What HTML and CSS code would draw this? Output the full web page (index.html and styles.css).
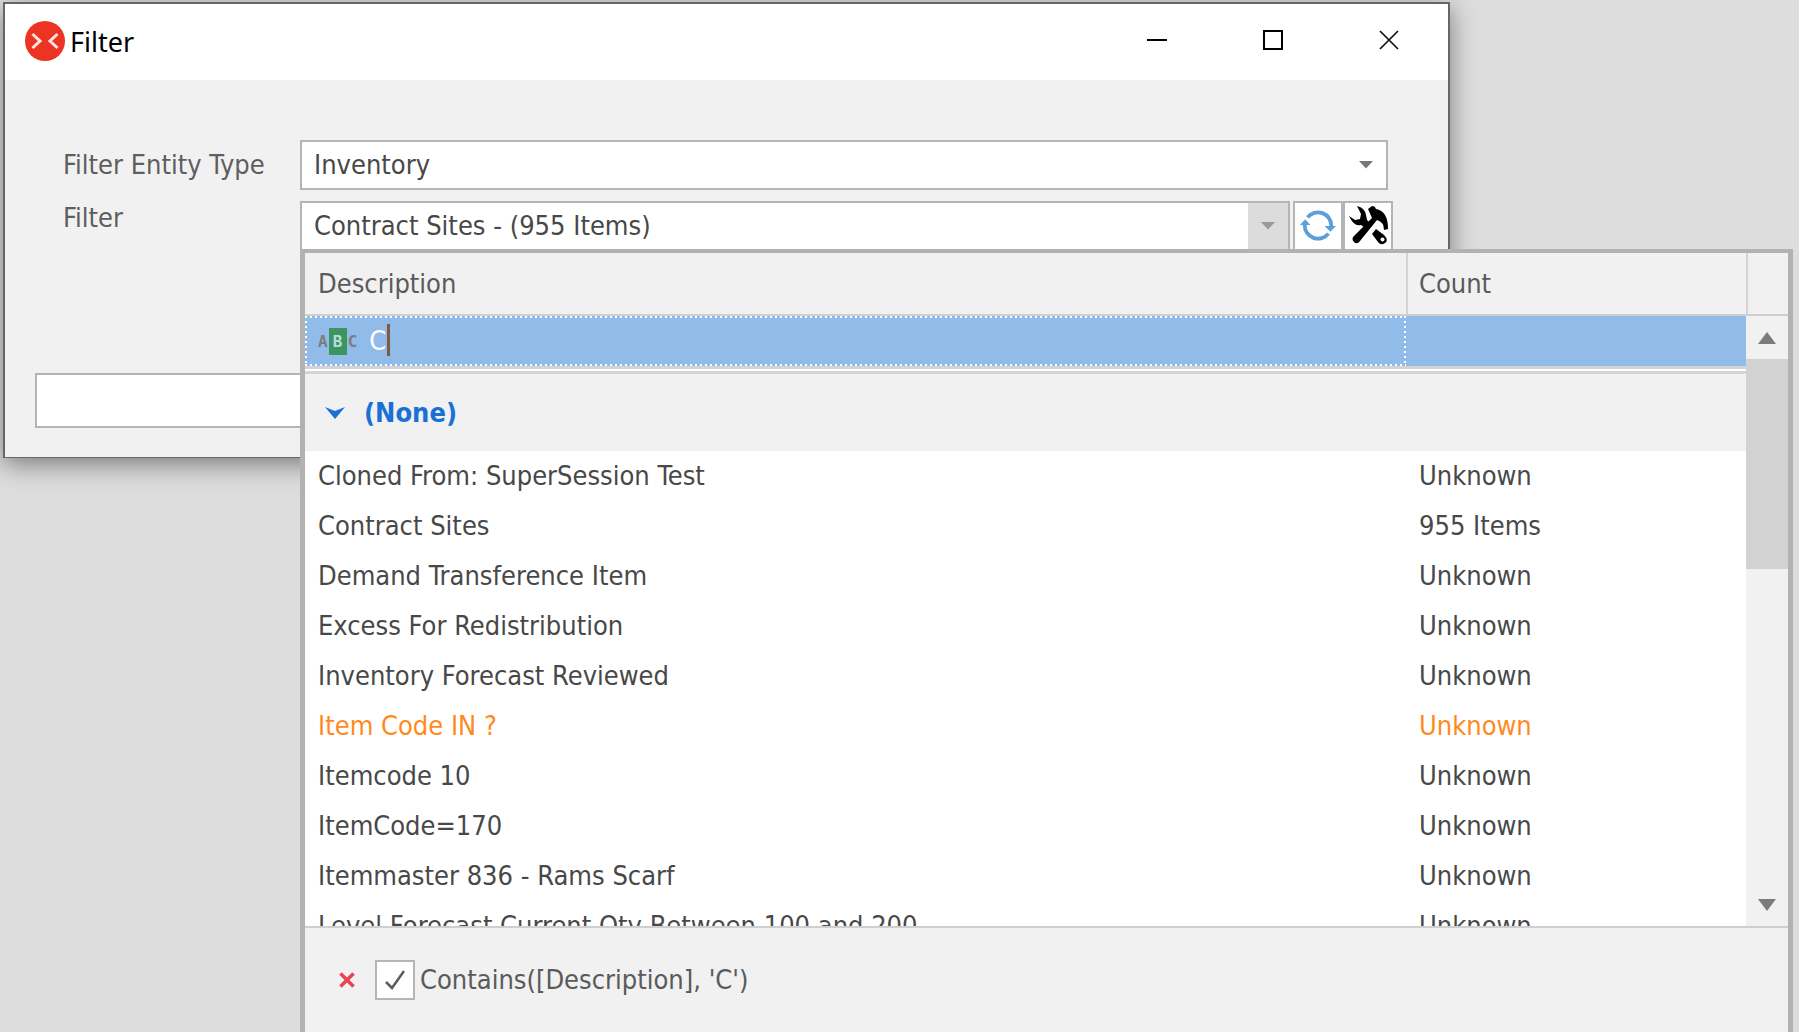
FILE: index.html
```html
<!DOCTYPE html>
<html lang="en">
<head>
<meta charset="utf-8">
<title>Filter</title>
<link rel="stylesheet" href="styles.css">
</head>
<body>
<main class="dialog">
  <header class="titlebar">
    <svg class="logo" viewBox="0 0 40 40" aria-hidden="true"><circle cx="20" cy="20" r="20" fill="#ec3425"/><path d="M7.500 13L15 20l-7.500 7M32.500 13L25 20l7.500 7" fill="none" stroke="#ffe3df" stroke-width="3"/></svg>
    <h1 class="title">Filter</h1>
    <button class="winbtn" type="button" aria-label="Minimize"><svg viewBox="0 0 20 20"><path d="M0 10h20" stroke="#000" stroke-width="2"/></svg></button>
    <button class="winbtn" type="button" aria-label="Maximize"><svg viewBox="0 0 20 20"><path d="M1 1h18v18H1z" fill="none" stroke="#000" stroke-width="2"/></svg></button>
    <button class="winbtn" type="button" aria-label="Close"><svg viewBox="0 0 20 20"><path d="M1 1l18 18M19 1L1 19" stroke="#111" stroke-width="1.700"/></svg></button>
  </header>
  <form class="form">
    <div class="row">
      <label class="label" for="entity">Filter Entity Type</label>
      <div class="combo combo-entity">
        <select id="entity" class="field"><option>Inventory</option></select>
        <span class="drop"><svg viewBox="0 0 14 8"><path d="M0 0h14L7 7.500z" fill="#777"/></svg></span>
      </div>
    </div>
    <div class="row">
      <label class="label" for="filter">Filter</label>
      <div class="combo">
        <select id="filter" class="field"><option>Contract Sites - (955 Items)</option></select>
        <span class="drop drop-open"><svg viewBox="0 0 14 8"><path d="M0 0h14L7 7.500z" fill="#999"/></svg></span>
      </div>
      <button class="tool tool-first" type="button" aria-label="Refresh">
        <svg viewBox="0 0 40 40"><g fill="none" stroke="#5b9fd8" stroke-width="4"><path d="M9 11A14 14 0 0 1 34 20"/><path d="M31 28A14 14 0 0 1 6 19"/></g><path d="M27 20h12l-6 6z" fill="#5b9fd8"/><path d="M1 19h11l-5.500-6z" fill="#5b9fd8"/></svg>
      </button>
      <button class="tool" type="button" aria-label="Edit filter">
        <svg viewBox="0 0 40 40"><path d="M9 0q8 2 9 9l1 5 2 2-5 5-3-2q-7 2-12-9l6 4 5-1 1-5z"/><path d="M20 3l4-3q3 0 4 3 12 2 12 20l-4 1q0-8-7-10L12 35q-3 4-6 1t0-6L24 12z"/><path d="M28 23l8 6q5 5 1 8t-7-1l-6-8z"/><circle cx="34.500" cy="33.500" r="2" fill="#fff"/></svg>
      </button>
    </div>
    <input class="result" type="text" aria-label="Filter expression">
  </form>
</main>

<section class="popup" aria-label="Filter list">
  <div class="list">
    <div class="rows">
      <table class="grid">
        <colgroup><col><col class="col-count"></colgroup>
        <thead><tr><th scope="col">Description</th><th scope="col">Count</th></tr></thead>
        <tbody>
          <tr class="search">
            <td class="focus"><div class="search-box">
              <span class="abc" aria-hidden="true"><span>A</span><span class="abc-mid">B</span><span>C</span></span>
              <span class="edit"><input class="search-input" type="text" value="C" aria-label="Description contains"><span class="caret"></span></span>
            </div></td>
            <td></td>
          </tr>
          <tr class="group"><td colspan="2"><button class="group-btn" type="button"><svg viewBox="0 0 20 12"><path d="M0 0l10 4 10-4-10 12z" fill="#1b70d6"/></svg>(None)</button></td></tr>
          <tr><td>Cloned From: SuperSession Test</td><td>Unknown</td></tr>
          <tr><td>Contract Sites</td><td>955 Items</td></tr>
          <tr><td>Demand Transference Item</td><td>Unknown</td></tr>
          <tr><td>Excess For Redistribution</td><td>Unknown</td></tr>
          <tr><td>Inventory Forecast Reviewed</td><td>Unknown</td></tr>
          <tr class="warn"><td>Item Code IN ?</td><td>Unknown</td></tr>
          <tr><td>Itemcode 10</td><td>Unknown</td></tr>
          <tr><td>ItemCode=170</td><td>Unknown</td></tr>
          <tr><td>Itemmaster 836 - Rams Scarf</td><td>Unknown</td></tr>
          <tr><td>Level Forecast Current Qty Between 100 and 200</td><td>Unknown</td></tr>
        </tbody>
      </table>
    </div>
    <div class="side">
      <div class="corner"></div>
      <button class="arrow" type="button" aria-label="Scroll up"><svg viewBox="0 0 18 12"><path d="M9 0l9 12H0z" fill="#7b7b7b"/></svg></button>
      <div class="track"><div class="thumb"></div></div>
      <button class="arrow" type="button" aria-label="Scroll down"><svg viewBox="0 0 18 12"><path d="M0 0h18L9 12z" fill="#7b7b7b"/></svg></button>
    </div>
  </div>
  <footer class="criteria">
    <button class="clear" type="button" aria-label="Clear filter"><svg viewBox="0 0 16 16"><path d="M1.500 1.500l13 13M14.500 1.500l-13 13" stroke="#e8434e" stroke-width="3.500"/></svg></button>
    <span class="check"><input id="active" class="check-input" type="checkbox" checked><svg class="tick" viewBox="0 0 20 20"><path d="M1 12l6 6L19 1" fill="none" stroke="#5c5c5c" stroke-width="2.500"/></svg></span>
    <label for="active">Contains([Description], 'C')</label>
  </footer>
</section>
</body>
</html>
```
FILE: styles.css
```css
* { box-sizing: border-box; }

body {
  margin: 0;
  padding: 2px 349px 0 3px;
  min-height: 100vh;
  background: #ddd;
  color: #484848;
  font: 27px/34px "DejaVu Sans Condensed", "DejaVu Sans", sans-serif;
}

button, input, select { font: inherit; color: inherit; margin: 0; }
button { border: 0; padding: 0; background: none; }
svg { display: block; flex: none; }

/* Dialog window */
.dialog {
  border: 2px solid #666;
  border-bottom-width: 1px;
  background: #f1f1f1;
  box-shadow: 0 6px 24px rgba(0, 0, 0, .45);
}
.titlebar {
  display: flex;
  align-items: center;
  height: 76px;
  padding: 0 1px 0 20px;
  background: #fff;
}
.logo { width: 40px; height: 40px; margin-bottom: 2px; }
.title {
  flex: 1;
  margin: 0 0 0 5px;
  color: #000;
  font: 27px/34px "Noto Sans", sans-serif;
}
.winbtn {
  display: flex;
  align-items: center;
  justify-content: center;
  width: 116px;
  height: 72px;
  margin-bottom: 4px;
}
.winbtn svg { width: 20px; height: 20px; }

/* Form */
.form {
  display: flex;
  flex-direction: column;
  padding: 60px 55px 29px 30px;
}
.row { display: flex; height: 50px; margin-bottom: 11px; padding-left: 28px; }
.label { width: 237px; color: #5e5e5e; }
.row:first-child .label { line-height: 50px; }
.combo { position: relative; flex: 1; display: flex; }
.combo-entity { margin-right: 5px; }
.field {
  flex: 1;
  width: 100%;
  padding: 0 50px 0 12px;
  border: 2px solid #b5b5b5;
  border-radius: 0;
  background: #fff;
  appearance: none;
}
.drop {
  position: absolute;
  inset: 2px 2px 2px auto;
  display: flex;
  align-items: center;
  justify-content: center;
  width: 40px;
  pointer-events: none;
}
.drop-open { background: #dcdcdc; }
.drop svg { width: 14px; height: 8px; }
.tool {
  display: flex;
  align-items: center;
  justify-content: center;
  width: 50px;
  border: 2px solid #b5b5b5;
  background: #fff;
}
.tool-first { margin-left: 3px; }
.tool svg { width: 40px; height: 40px; }
.tool-first svg { width: 38px; height: 38px; }
.result {
  width: 100%;
  height: 55px;
  margin-top: 111px;
  padding: 0 12px;
  border: 2px solid #b5b5b5;
  background: #fff;
}

/* Drop-down list window */
.popup {
  position: absolute;
  top: 249px;
  left: 300px;
  right: 6px;
  bottom: 0;
  display: flex;
  flex-direction: column;
  min-height: 500px;
  border: 5px solid #b2b2b2;
  border-top-width: 4px;
  border-bottom: 0;
  background: #f1f1f1;
}
.list { flex: 1; display: flex; min-height: 0; }
.rows { flex: 1; overflow: hidden; background: #fff; }
.grid { width: 100%; table-layout: fixed; border-spacing: 0; }
.col-count { width: 340px; }
.grid th, .grid td {
  height: 50px;
  padding: 0 13px;
  text-align: left;
  font-weight: normal;
  white-space: nowrap;
}
.grid th {
  height: 63px;
  border-bottom: 2px solid #cfcfcf;
  background: #f1f1f1;
  color: #5a5a5a;
}
.grid th + th { box-shadow: inset 2px 0 #d4d4d4; }
.grid .search td {
  height: 58px;
  border-bottom: 8px double #d4d4d4;
  background: #91bbe8;
  background-clip: padding-box;
}
.grid .search .focus {
  background:
    repeating-linear-gradient(90deg, #fff 0 2px, transparent 2px 5px) 0 0 / 100% 2px no-repeat,
    repeating-linear-gradient(90deg, #fff 0 2px, transparent 2px 5px) 0 100% / 100% 2px no-repeat,
    repeating-linear-gradient(#fff 0 2px, transparent 2px 5px) 0 0 / 2px 100% no-repeat,
    repeating-linear-gradient(#fff 0 2px, transparent 2px 5px) 100% 0 / 2px 100% no-repeat,
    #91bbe8;
  background-clip: padding-box;
}
.search-box { display: flex; align-items: center; }
.abc {
  display: flex;
  align-items: center;
  gap: 1px;
  margin-right: 12px;
  color: #7d7d7d;
  font: bold 16px/27px "DejaVu Sans Mono", monospace;
}
.abc-mid { width: 18px; background: #3d945e; color: #b5e0dc; text-align: center; }
.edit { position: relative; flex: 1; }
.search-input {
  display: block;
  width: 100%;
  height: 34px;
  padding: 0;
  border: 0;
  outline: 0;
  background: none;
  color: #fff;
}
.caret {
  position: absolute;
  top: 0;
  left: 18px;
  width: 3px;
  height: 32px;
  background: #7d5b3c;
}
.grid .group td { height: 77px; padding-left: 20px; background: #f1f1f1; }
.group-btn {
  display: flex;
  align-items: center;
  gap: 19px;
  color: #1b70d6;
  font-weight: bold;
}
.group-btn svg { width: 20px; height: 12px; }
.warn { color: #ff8a1c; }

/* Scroll bar */
.side { display: flex; flex-direction: column; width: 42px; }
.corner {
  height: 63px;
  border-bottom: 2px solid #cfcfcf;
  border-left: 2px solid #d4d4d4;
}
.arrow {
  display: flex;
  align-items: center;
  justify-content: center;
  height: 43px;
}
.arrow svg { width: 18px; height: 12px; }
.track { flex: 1; }
.thumb { height: 40%; background: #d2d2d2; }

/* Active criteria bar */
.criteria {
  display: flex;
  align-items: center;
  height: 106px;
  padding-left: 34px;
  border-top: 2px solid #cfcfcf;
  color: #5a5a5a;
}
.clear { margin-right: 20px; }
.clear svg { width: 16px; height: 16px; }
.check { position: relative; margin-right: 5px; }
.check-input {
  display: block;
  width: 40px;
  height: 40px;
  border: 2px solid #b5b5b5;
  background: #fff;
  appearance: none;
}
.tick {
  position: absolute;
  inset: 10px;
  width: 20px;
  height: 20px;
  visibility: hidden;
  pointer-events: none;
}
.check-input:checked + .tick { visibility: visible; }
```
